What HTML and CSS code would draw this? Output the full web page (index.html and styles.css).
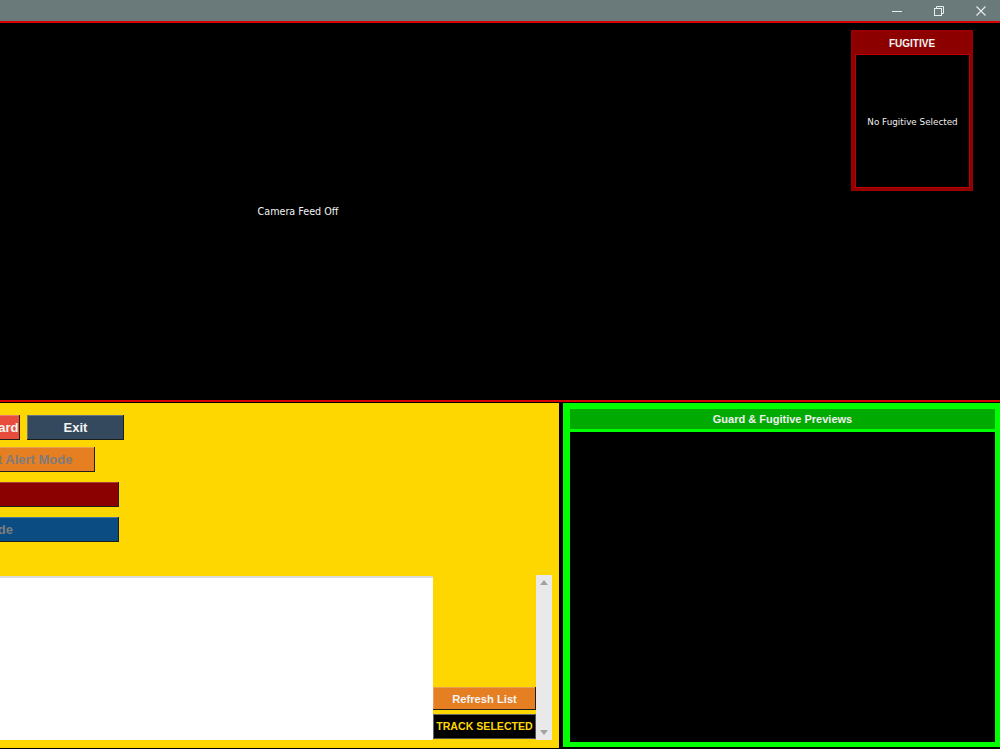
FILE: index.html
```html
<!DOCTYPE html>
<html>
<head>
<meta charset="utf-8">
<link rel="stylesheet" href="styles.css">
</head>
<body>
<div class="window">
  <div class="titlebar">
    <div class="tb-btn">
      <svg width="10" height="10" viewBox="0 0 10 10"><path d="M0 5.5H10" stroke="#e8eeee" stroke-width="1"/></svg>
    </div>
    <div class="tb-btn">
      <svg width="10" height="10" viewBox="0 0 10 10" fill="none" stroke="#e8eeee" stroke-width="1"><rect x="0.5" y="2.5" width="7" height="7"/><path d="M2.5 2.5V0.5H9.5V7.5H7.5"/></svg>
    </div>
    <div class="tb-btn">
      <svg width="10" height="10" viewBox="0 0 10 10" stroke="#e8eeee" stroke-width="1.1"><path d="M0.5 0.5L9.5 9.5M9.5 0.5L0.5 9.5"/></svg>
    </div>
  </div>
  <div class="redline"></div>
  <div class="camera">
    <div class="feed"><span class="feed-text">Camera Feed Off</span></div>
    <div class="fugitive">
      <div class="fug-head">FUGITIVE</div>
      <div class="fug-body">No Fugitive Selected</div>
    </div>
  </div>
  <div class="redline"></div>
  <div class="bottom">
    <div class="controls">
      <div class="row">
        <button class="btn btn-red btn-reg">Register Guard</button>
        <button class="btn btn-slate btn-exit">Exit</button>
      </div>
      <div class="row">
        <button class="btn btn-orange btn-alert dis">Start Alert Mode</button>
      </div>
      <div class="row">
        <button class="btn btn-darkred btn-wide">Stop</button>
      </div>
      <div class="row">
        <button class="btn btn-blue btn-wide btn-mode dis">Test Mode</button>
      </div>
      <div class="listarea">
        <div class="listbox"></div>
        <div class="listbtns">
          <button class="btn btn-orange btn-refresh">Refresh List</button>
          <button class="btn btn-track">TRACK SELECTED</button>
        </div>
        <div class="scrollbar">
          <svg width="8" height="5" viewBox="0 0 8 5"><path d="M0 5L4 0L8 5Z" fill="#a3a3a3"/></svg>
          <svg width="8" height="5" viewBox="0 0 8 5"><path d="M0 0L4 5L8 0Z" fill="#a3a3a3"/></svg>
        </div>
      </div>
    </div>
    <div class="previews">
      <div class="prev-head">Guard &amp; Fugitive Previews</div>
      <div class="prev-body"></div>
    </div>
  </div>
</div>
</body>
</html>
```
FILE: styles.css
```css
* { box-sizing: border-box; }
html, body { margin: 0; padding: 0; background: #000; }
body { font-family: "Liberation Sans", Arial, sans-serif; width: 1000px; height: 749px; overflow: hidden; }
.window { width: 1000px; height: 749px; display: flex; flex-direction: column; }

.titlebar { height: 21px; background: #6a7a7a; display: flex; justify-content: flex-end; align-items: center; padding-right: 14px; gap: 32px; }
.tb-btn { width: 10px; height: 10px; display: flex; }
.tb-btn svg { display: block; }

.redline { height: 2px; background: #d80000; flex: none; }

.camera { height: 377px; flex: none; position: relative; background: #000; }
.feed { width: 596px; height: 100%; display: flex; align-items: center; justify-content: center; }
.feed-text { color: #f2f2f2; font-family: "DejaVu Sans", sans-serif; font-size: 9.6px; }

.fugitive { position: absolute; left: 851px; top: 7px; width: 122px; height: 161px; border: 2px solid #980000; background: #8d0000; display: flex; flex-direction: column; }
.fug-head { height: 22px; background: #8d0000; color: #f4f4f4; font-weight: bold; font-size: 10px; display: flex; align-items: center; justify-content: center; }
.fug-body { flex: 1; background: #000; margin: 0 1px 1px 2px; border: 1px solid #c00000; color: #eeeeee; font-size: 8.8px; font-family: "DejaVu Sans", sans-serif; display: flex; align-items: center; justify-content: center; padding-top: 1px; }

.bottom { margin-top: 1px; height: 345px; flex: none; display: flex; gap: 4px; }
.controls { width: 559px; background: #ffd700; overflow: hidden; padding-top: 12px; display: flex; flex-direction: column; }
.row { display: flex; gap: 7px; height: 25px; flex: none; }
.row + .row { margin-top: 7px; }
.row:nth-child(3), .row:nth-child(4) { margin-top: 10px; }

.btn { border: none; padding: 0; height: 25px; font-family: "Liberation Sans", Arial, sans-serif; font-weight: bold; font-size: 13px; color: #f4f4f4; box-shadow: inset -1px -1px 0 #1e1e1e, inset 1px 1px 0 rgba(255,255,255,0.25); display: flex; align-items: center; justify-content: center; white-space: nowrap; flex: none; }
.dis { color: #7c7c7c; }
.btn-red { background: #e74c3c; }
.btn-slate { background: #34495e; }
.btn-orange { background: #e67e22; }
.btn-darkred { background: #8b0000; }
.btn-blue { background: #0b4c82; }

.btn-reg { width: 97px; margin-left: -77px; }
.btn-exit { width: 97px; }
.btn-alert { width: 145px; margin-left: -50px; }
.btn-wide { width: 300px; margin-left: -181px; }
.btn-mode { justify-content: flex-end; padding-right: 106px; }

.listarea { margin-top: 33px; display: flex; align-items: stretch; height: 165px; }
.listbox { width: 433px; margin-top: 1px; background: #fff; border-top: 2px solid #dcdcdc; }
.listbtns { width: 103px; display: flex; flex-direction: column; justify-content: flex-end; gap: 4px; padding-bottom: 1px; }
.btn-refresh { height: 23px; font-size: 11.2px; }
.btn-track { height: 25px; background: #000; color: #ffd700; font-size: 10.6px; box-shadow: inset -1px -1px 0 #555, inset 1px 1px 0 #666; padding-bottom: 1px; }
.scrollbar { width: 16px; background: #e9e9e9; display: flex; flex-direction: column; justify-content: space-between; align-items: center; padding: 5px 0 5px; }
.scrollbar svg { display: block; }

.previews { width: 437px; background: #00ff00; padding: 6px 5px 5px 7px; margin-bottom: 1px; display: flex; flex-direction: column; }
.prev-head { height: 20px; background: #00aa00; color: #f0f0f0; font-weight: bold; font-size: 11px; display: flex; align-items: center; justify-content: center; flex: none; }
.prev-body { flex: 1; background: #000; margin-top: 3px; }
```
